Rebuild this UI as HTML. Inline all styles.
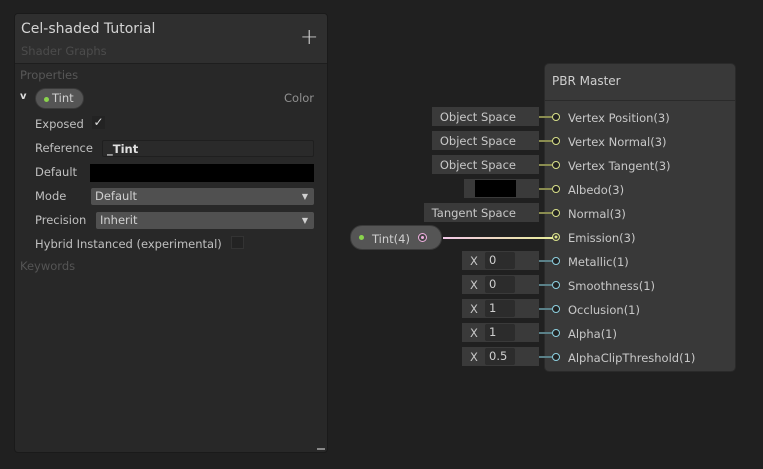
<!DOCTYPE html>
<html><head><meta charset="utf-8"><style>
*{margin:0;padding:0;box-sizing:border-box}
body{width:763px;height:469px;background:#202020;position:relative;overflow:hidden;font-family:"DejaVu Sans","Liberation Sans",sans-serif;font-size:11.5px;color:#c4c4c4}
.a{position:absolute;white-space:nowrap}
.panel{left:14px;top:13px;width:314px;height:440px;background:#282828;border:1px solid #1a1a1a;border-radius:4px;overflow:hidden}
.hdr{left:0;top:0;width:312px;height:50px;background:#2f2f2f;border-bottom:1px solid #1e1e1e}
.lbl{color:#c0c0c0}
.field{background:#3e3e3e;border-radius:2px;height:17px;padding-left:4px;line-height:17px;color:#d0d0d0}
.node{left:544px;top:63px;width:192px;height:309px;background:#393939;border-radius:5px;border:1px solid #2a2a2a}
.ib{background:#3a3a3a;height:19px;line-height:20px;color:#c8c8c8;text-align:right;padding-right:23px}
.dot{width:5px;height:5px;border-radius:50%;position:absolute}
.port{width:8px;height:8px;border-radius:50%;border:1.5px solid #d8e08a;background:#222;position:absolute}
.pb{border-color:#8ed0e0}
.lnk{position:absolute;height:2px}
</style></head><body>
<div class="a panel">
 <div class="a hdr"></div>
 <div class="a" style="left:6px;top:7px;font-size:14px;color:#d4d4d4">Cel-shaded Tutorial</div>
 <div class="a" style="left:6px;top:30px;color:#4c4c4c">Shader Graphs</div>
 <div class="a" style="left:285px;top:13px;font-size:22px;color:#cfcfcf;font-weight:300;line-height:22px">+</div>
 <div class="a" style="left:5px;top:54px;color:#575757">Properties</div>
 <div class="a" style="left:5px;top:77px;font-size:10px;color:#ddd;font-weight:bold">v</div>
 <div class="a" style="left:20px;top:74px;width:49px;height:21px;border-radius:11px;background:#555;border:1px solid #3a3a3a"></div>
 <div class="dot" style="left:29px;top:83px;background:#8ad44d"></div>
 <div class="a" style="left:37px;top:77px;color:#d0d0d0">Tint</div>
 <div class="a" style="left:269px;top:77px;color:#909090">Color</div>
 <div class="a lbl" style="left:20px;top:103px">Exposed</div>
 <div class="a" style="left:77px;top:102px;width:13px;height:13px;background:#232323;color:#ddd;font-size:12px;line-height:13px;text-align:center">&#10003;</div>
 <div class="a lbl" style="left:20px;top:127px">Reference</div>
 <div class="a field" style="left:87px;top:126px;width:212px;background:#2a2a2a;border:1px solid #1f1f1f;font-weight:bold;color:#e0e0e0">_Tint</div>
 <div class="a lbl" style="left:20px;top:151px">Default</div>
 <div class="a" style="left:75px;top:150px;width:224px;height:18px;background:#000"></div>
 <div class="a lbl" style="left:20px;top:175px">Mode</div>
 <div class="a field" style="left:76px;top:174px;width:223px;background:#505050">Default<span style="position:absolute;right:6px;font-size:8px">&#9660;</span></div>
 <div class="a lbl" style="left:20px;top:199px">Precision</div>
 <div class="a field" style="left:81px;top:198px;width:218px;background:#505050">Inherit<span style="position:absolute;right:6px;font-size:8px">&#9660;</span></div>
 <div class="a lbl" style="left:20px;top:223px">Hybrid Instanced (experimental)</div>
 <div class="a" style="left:216px;top:222px;width:13px;height:13px;background:#232323;border:1px solid #333"></div>
 <div class="a" style="left:5px;top:245px;color:#555">Keywords</div>
 <div class="a" style="left:302px;top:434px;width:8px;height:2px;background:#888"></div>
</div>

<div class="a node">
 <div class="a" style="left:0;top:36px;width:190px;height:1px;background:#2a2a2a"></div>
 <div class="a" style="left:7px;top:10px;color:#cfcfcf;font-size:12px">PBR Master</div>
</div>

<div id="rows"></div>
<div class="a ib" style="left:432px;top:107px;width:107px">Object Space</div>
<div class="a ib" style="left:432px;top:131px;width:107px">Object Space</div>
<div class="a ib" style="left:432px;top:155px;width:107px">Object Space</div>
<div class="a ib" style="left:464px;top:179px;width:75px"></div>
<div class="a" style="left:475px;top:180px;width:41px;height:17px;background:#000"></div>
<div class="a ib" style="left:424px;top:203px;width:115px">Tangent Space</div>
<div class="a ib" style="left:462px;top:251px;width:77px;text-align:left;padding-left:8px">X</div>
<div class="a ib" style="left:462px;top:275px;width:77px;text-align:left;padding-left:8px">X</div>
<div class="a ib" style="left:462px;top:299px;width:77px;text-align:left;padding-left:8px">X</div>
<div class="a ib" style="left:462px;top:323px;width:77px;text-align:left;padding-left:8px">X</div>
<div class="a ib" style="left:462px;top:347px;width:77px;text-align:left;padding-left:8px">X</div>
<div class="a field" style="left:485px;top:252px;width:30px;background:#2c2c2c">0</div>
<div class="a field" style="left:485px;top:276px;width:30px;background:#2c2c2c">0</div>
<div class="a field" style="left:485px;top:300px;width:30px;background:#2c2c2c">1</div>
<div class="a field" style="left:485px;top:324px;width:30px;background:#2c2c2c">1</div>
<div class="a field" style="left:485px;top:348px;width:30px;background:#2c2c2c">0.5</div>

<div class="a" style="left:350px;top:225px;width:92px;height:25px;border-radius:12px;background:#555;border:1px solid #3a3a3a"></div>
<div class="dot" style="left:359px;top:235px;background:#8ad44d"></div>
<div class="a" style="left:372px;top:232px;color:#d0d0d0">Tint(4)</div>
<div class="a" style="left:418px;top:233px;width:9px;height:9px;border-radius:50%;border:1.5px solid #f0b0e0;background:#444"></div>
<div class="a" style="left:421px;top:236px;width:3px;height:3px;border-radius:50%;background:#f0b0e0"></div>
<div class="lnk" style="left:443px;top:237px;width:110px;background:linear-gradient(90deg,#f2c8e8,#e8ec9a)"></div>

<script>
const labels=["Vertex Position(3)","Vertex Normal(3)","Vertex Tangent(3)","Albedo(3)","Normal(3)","Emission(3)","Metallic(1)","Smoothness(1)","Occlusion(1)","Alpha(1)","AlphaClipThreshold(1)"];
let h="";
labels.forEach((l,i)=>{const y=117+i*24;const b=i>=6;const c=b?"#8ed0e0":"#e0e68a";
h+=`<div class="port ${b?'pb':''}" style="left:552px;top:${y-4}px;${i==5?'background:#e0e68a;box-shadow:inset 0 0 0 1.5px #333':''}"></div>`;
h+=`<div class="a" style="left:568px;top:${y-6}px;color:#c8c8c8">${l}</div>`;
if(i!=5){h+=`<div class="dot" style="left:526px;top:${y-2}px;background:${c}"></div>`;
h+=`<div class="lnk" style="left:533px;top:${y-1}px;width:19px;background:${b?'#5a8088':'#8a8c50'}"></div>`;}
});
document.getElementById("rows").outerHTML=h;
</script>
</body></html>
